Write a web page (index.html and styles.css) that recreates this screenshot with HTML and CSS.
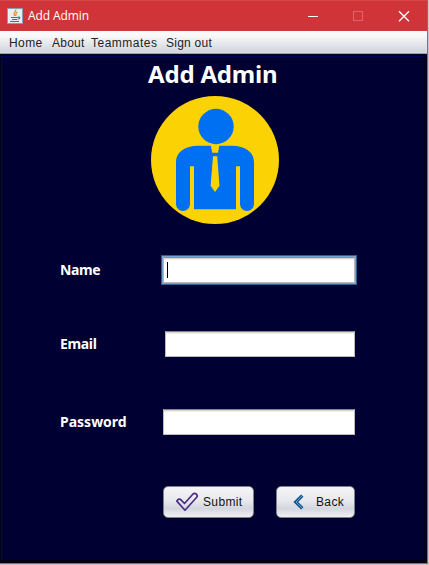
FILE: index.html
```
<!DOCTYPE html>
<html lang="en">
<head>
<meta charset="utf-8">
<title>Add Admin</title>
<link rel="stylesheet" href="styles.css">
</head>
<body>
<div class="window">
  <header class="titlebar">
    <svg class="app-icon" width="16" height="16" viewBox="0 0 16 16">
      <rect x=".5" y=".5" width="15" height="15" fill="#e9eef2" stroke="#8a9daf"/>
      <path d="M8.7 1.5C9.3 4 5.5 4.4 7.6 8M10.4 4C7.9 5.3 9.6 6 8.6 8" fill="none" stroke="#ee8b2e" stroke-width="1.3"/>
      <path d="M4 9.5h7M5 11.5h5M3 13.5h9M11 9.2c3-.7 2 2-.5 2" fill="none" stroke="#43708f" stroke-width="1.1"/>
    </svg>
    <span class="caption">Add Admin</span>
    <svg class="controls" width="104" height="12" viewBox="0 0 104 12">
      <path d="M1 6.5h10" stroke="#fff"/>
      <rect x="46.5" y="1.5" width="9" height="9" fill="none" stroke="#df6568"/>
      <path d="M92 1.2l10 10M102 1.2l-10 10" stroke="#fff" stroke-width="1.3"/>
    </svg>
  </header>
  <nav class="menu"><span class="home">Home</span><span class="about">About</span><span class="team">Teammates</span><span class="signout">Sign out</span></nav>
  <main class="panel">
    <h1>Add Admin</h1>
    <svg class="avatar" width="128" height="128" viewBox="0 0 128 128">
      <circle cx="64" cy="64" r="64" fill="#fbd304"/>
      <circle cx="65" cy="30.5" r="17.7" fill="#0070f3"/>
      <path d="M47 49.7H81C94 49.7 103 56 103 66V108a7 7 0 0 1-14 0V70.3H85V113.3H43V70.3H39V108a7 7 0 0 1-14 0V66C25 56 34 49.7 47 49.7Z" fill="#0070f3"/>
      <path d="M59.7 49H68.5L67 56.7H61.3ZM62 60.3h4.2L68.5 89.7 64 95.9 59.6 89.7Z" fill="#fbd304"/>
    </svg>
    <form class="form">
      <div class="row name"><label>Name</label><div class="field focused"><i class="caret"></i></div></div>
      <div class="row email"><label>Email</label><div class="field"></div></div>
      <div class="row password"><label>Password</label><div class="field"></div></div>
      <div class="actions">
        <button type="button" class="submit"><svg width="24" height="20" viewBox="0 0 24 20"><path d="M1.8 9.1Q3.8 5.7 6.2 8.2L9.5 11.5 17.8 2.2Q19.5.7 21.5 2.2 23 4 21.5 5.5L10 18.2Z" fill="none" stroke="#4d2b87" stroke-width="1.7" stroke-linejoin="round"/></svg><span>Submit</span></button>
        <button type="button" class="back"><svg width="12" height="16" viewBox="0 0 12 16"><path d="M9.3 1.6L2.8 8l6.5 6.4" fill="none" stroke="#14558f" stroke-width="3.4"/><path d="M9 2L3 8l6 6" fill="none" stroke="#69a9dc" stroke-width=".9"/></svg><span>Back</span></button>
      </div>
    </form>
  </main>
</div>
</body>
</html>
```
FILE: styles.css
```
* { box-sizing: border-box; }
body { margin: 0; width: 429px; height: 565px; overflow: hidden; background: #c9c5cb; }
.window { width: 428px; height: 564px; border-right: 1px solid #d64b58; border-bottom: 1px solid #d64b58; }
.titlebar { height: 31px; display: flex; align-items: center; padding-left: 7px; background: #d13438; border-top: 1px solid #d64448; }
.caption { width: 270px; margin-left: 5px; color: #fff; font: 12px/16px "Open Sans", sans-serif; letter-spacing: -.1px; }
.controls { margin-left: 9px; }
.menu { height: 23px; display: flex; padding-left: 9px; border-bottom: 1px solid #a0a2ac; background: linear-gradient(#fff, #f7f7f8 25%, #d4d7df 90%); color: #222; font: 12px/24px "Liberation Sans", Arial, sans-serif; letter-spacing: .25px; }
.home { width: 43px; letter-spacing: .4px; }
.about { width: 39px; }
.team { width: 75px; letter-spacing: .5px; }
.panel { height: 509px; background: #000032; border: 1px solid #00001f; border-top-width: 2px; border-bottom: 3px solid #000016; border-right: 3px solid #000020; box-shadow: inset 1px 1px #000064; }
h1 { margin: 0 0 0 147px; height: 40px; color: #fff; font: bold 24px/35px "Noto Sans", sans-serif; letter-spacing: -.2px; white-space: nowrap; }
.avatar { display: block; margin-left: 150px; }
.form { margin: 31px 0 0 59px; }
.row { display: flex; height: 30px; align-items: center; }
.row label { width: 105px; color: #fff; font: bold 14px/20px "Noto Sans", sans-serif; }
.name label, .email label { letter-spacing: -.35px; }
.field { width: 190px; height: 26px; background: #fff; border: 1px solid #bbb; border-top-color: #85858a; box-shadow: inset 0 1px #d5d5d8, inset 0 2px #f0f0f0; }
.focused { width: 192px; margin-left: -2px; border-color: #b9b7b5; border-top-color: #8d8d90; box-shadow: 0 0 0 1px #73a4d1, 0 0 0 2px #345d8d, inset 0 1px #d5d5d8, inset 0 2px #f0f0f0; }
.caret { display: block; width: 1px; height: 16px; margin: 4px 0 0 3px; background: #000; }
.email { margin-top: 44px; }
.password { margin-top: 48px; }
.password .field { width: 192px; margin-left: -2px; }
.actions { display: flex; gap: 22px; margin: 49px 0 0 103px; }
button { height: 32px; display: flex; align-items: center; padding: 0 0 0 11px; border: 1px solid #80828a; border-radius: 5px; background: linear-gradient(#f5f5f7, #e8e9ed 45%, #d3d6de 72%, #f0f1f4); color: #111; font: 12px/16px "Liberation Sans", Arial, sans-serif; letter-spacing: .35px; }
.submit { width: 91px; }
.submit span { margin-left: 4px; }
.back { width: 79px; padding-left: 16px; }
.back span { margin-left: 11px; }
```
